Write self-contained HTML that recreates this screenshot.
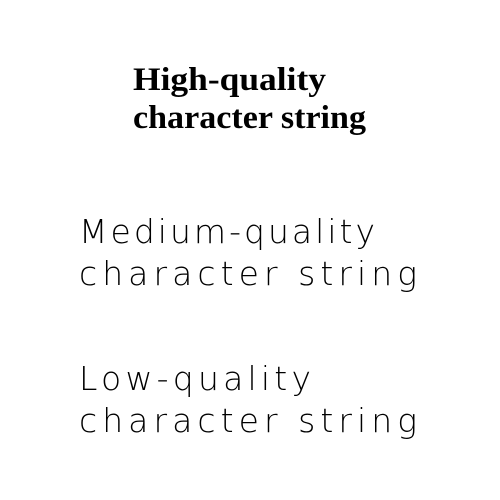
<!DOCTYPE html>
<html><head><style>html,body{margin:0;padding:0;background:#fff;width:500px;height:500px;overflow:hidden}</style></head>
<body>
<svg width="500" height="500" xmlns="http://www.w3.org/2000/svg">
<g font-family="'Liberation Serif', serif" font-weight="bold" font-size="33" fill="#000">
<text x="133" y="90" textLength="193" lengthAdjust="spacingAndGlyphs">High-quality</text>
<text x="133" y="128" textLength="233" lengthAdjust="spacingAndGlyphs">character string</text>
</g>
<g font-family="'DejaVu Sans ExtraLight','DejaVu Sans','Liberation Sans',sans-serif" font-weight="200" font-size="33" fill="#000">
<text x="79" y="243" textLength="296" lengthAdjust="spacing">Medium-quality</text>
<text x="79" y="285" textLength="338" lengthAdjust="spacing">character string</text>
<text x="79" y="390" textLength="232" lengthAdjust="spacing">Low-quality</text>
<text x="79" y="432" textLength="338" lengthAdjust="spacing">character string</text>
</g>
</svg>
</body></html>
